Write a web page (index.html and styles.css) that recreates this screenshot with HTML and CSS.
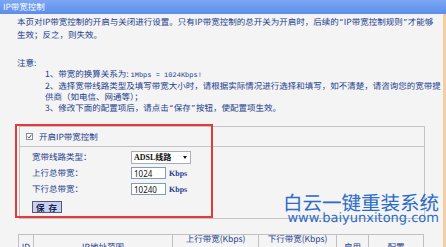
FILE: index.html
```html
<!DOCTYPE html>
<html lang="zh-CN">

<head>
  <meta charset="UTF-8" />
  <meta name="viewport" content="width=device-width, initial-scale=1.0" />
  <title>IP带宽控制</title>
  <link rel="stylesheet" href="styles.css">
</head>

<body>
  <div class="title-bar">IP带宽控制</div>

  <div id="page">
    <p class="intro">本页对IP带宽控制的开启与关闭进行设置。只有IP带宽控制的总开关为开启时，后续的<span class="q">“</span>IP带宽控制规则<span class="q">”</span>才能够<br>生效；反之，则失效。</p>

    <div class="notice">
      <p class="notice-title">注意:</p>
      <p class="notice-item">1、带宽的换算关系为: <span class="mono">1Mbps = 1024Kbps!</span></p>
      <p class="notice-item">2、选择宽带线路类型及填写带宽大小时，请根据实际情况进行选择和填写，如不清楚，请咨询您的宽带提<br>供商（如电信、网通等）；</p>
      <p class="notice-item">3、修改下面的配置项后，请点击<span class="q">“</span>保存<span class="q">”</span>按钮，使配置项生效。</p>
    </div>

    <div class="panel">
      <div class="panel-head">
        <span class="check">
          <svg width="7" height="7" viewBox="0 0 7 7">
            <rect x="0.5" y="0.5" width="6" height="6" fill="#fff" stroke="#8c8c8c" />
            <path d="M1.7 3.6 L3 5 L5.4 1.8" fill="none" stroke="#3b5590" stroke-width="1" />
          </svg>
        </span>
        <span>开启IP带宽控制</span>
      </div>
      <div class="panel-body">
        <label>宽带线路类型：</label>
        <div class="select-wrap">
          <select id="line-type">
            <option>ADSL线路</option>
          </select>
        </div>

        <label>上行总带宽：</label>
        <input type="text" class="bw-input" value="1024" />
        <span class="unit">Kbps</span>

        <label>下行总带宽：</label>
        <input type="text" class="bw-input" value="10240" />
        <span class="unit">Kbps</span>

        <div class="btn-row">
          <input type="button" id="save" value="保 存" />
        </div>
      </div>
    </div>

    <table class="rules">
      <colgroup>
        <col style="width:15px">
        <col style="width:139px">
        <col style="width:43px">
        <col style="width:43px">
        <col style="width:39px">
        <col style="width:39px">
        <col style="width:32px">
        <col style="width:55px">
      </colgroup>
      <tr class="head-top">
        <th rowspan="2">ID</th>
        <th rowspan="2">IP地址范围</th>
        <th colspan="2" class="group">上行带宽(Kbps)</th>
        <th colspan="2" class="group">下行带宽(Kbps)</th>
        <th rowspan="2">启用</th>
        <th rowspan="2">配置</th>
      </tr>
      <tr class="head-sub">
        <th>最小</th>
        <th>最大</th>
        <th>最小</th>
        <th>最大</th>
      </tr>
    </table>

    <!-- annotation drawn over the screenshot -->
    <div class="highlight"></div>

    <div class="watermark">
      <div class="wm-name">白云一键重装系统</div>
      <div class="wm-url">www.baiyunxitong.com</div>
    </div>
  </div>
</body>

</html>
```

FILE: styles.css
```css
body {
  margin: 0;
  padding: 0;
  height: 100vh;
  overflow: hidden;
  background-color: #f6cca1;
  font-family: "Noto Sans CJK SC", "Noto Sans", sans-serif;
  font-size: 8.5px;
  text-rendering: geometricPrecision;
  color: #23408e;
}

.title-bar {
  height: 14px;
  line-height: 14px;
  padding-left: 3px;
  color: #fff;
  background: linear-gradient(#7ba7f3, #5d8deb);
}

#page {
  position: relative;
  width: 443px;
  height: 233px;
  overflow: hidden;
  background-color: #f4f4f4;
}

p {
  margin: 0;
}

.intro {
  padding: 2px 0 0 17px;
  line-height: 12px;
  white-space: nowrap;
}

.q {
  font-family: "Noto Sans", sans-serif;
  margin: 0 1px;
}

.notice {
  margin-top: 17px;
  line-height: 11.3px;
  white-space: nowrap;
}

.notice-title {
  padding-left: 17px;
}

.notice-item {
  padding-left: 45px;
}

.mono {
  font-family: "Liberation Mono", monospace;
  font-size: 7px;
  line-height: 1;
}

/* on/off panel */
.panel {
  margin: 12px 0 0 19px;
  width: 404px;
  border: 1px solid #c4c4c4;
}

.panel-head {
  display: flex;
  align-items: center;
  gap: 6px;
  height: 19px;
  padding-left: 6px;
  border-bottom: 1px solid #c4c4c4;
}

.check svg {
  display: block;
}

.panel-body {
  display: grid;
  grid-template-columns: 96px 35px max-content;
  grid-auto-rows: 16px;
  align-items: center;
  column-gap: 3px;
  padding: 2px 0 5px 12px;
}

.select-wrap {
  grid-column: 2 / span 2;
  position: relative;
  width: 60px;
  height: 13px;
}

.select-wrap::after {
  content: "";
  position: absolute;
  right: 4px;
  top: 5px;
  border-left: 2.5px solid transparent;
  border-right: 2.5px solid transparent;
  border-top: 3px solid #111;
}

#line-type {
  appearance: none;
  display: block;
  width: 60px;
  height: 13px;
  margin: 0;
  padding: 0 0 0 2px;
  box-sizing: border-box;
  border: 1px solid #a9aeb6;
  border-radius: 0;
  background-color: #fff;
  font-family: "Liberation Serif", "Noto Sans CJK SC", serif;
  font-size: 8px;
  font-weight: bold;
  color: #111;
}

.bw-input {
  display: block;
  width: 35px;
  height: 12px;
  margin: 0;
  padding: 0 2px;
  box-sizing: border-box;
  border: 1px solid #7f9db9;
  background-color: #fff;
  font-family: "Noto Sans", sans-serif;
  font-size: 8px;
  color: #111;
}

.unit {
  font-family: "Liberation Serif", serif;
  font-weight: bold;
  font-size: 8px;
  color: #1d3c8e;
}

.btn-row {
  grid-column: 1 / -1;
  margin-top: 4px;
}

#save {
  display: block;
  width: 30px;
  height: 12px;
  padding: 0;
  border: 1px solid #56586e;
  background-color: #c8d0f3;
  font-family: "Noto Sans CJK SC", sans-serif;
  font-size: 8.5px;
  font-weight: bold;
  line-height: 10px;
  color: #1b1f4a;
  letter-spacing: 1px;
}

/* rule list */
.rules {
  margin: 15px 0 0 18px;
  width: 405px;
  table-layout: fixed;
  border-collapse: collapse;
}

.rules th {
  padding: 0;
  border: 1px solid #c0c0c0;
  font-weight: normal;
  line-height: 10px;
  white-space: nowrap;
  overflow: hidden;
}

.head-top th {
  height: 13px;
}

.rules th.group {
  vertical-align: top;
  line-height: 9px;
}

.head-sub th {
  height: 8px;
}

.highlight {
  position: absolute;
  left: 15px;
  top: 110px;
  width: 194px;
  height: 90px;
  border: 2px solid #e33b3c;
}

.watermark {
  position: absolute;
  right: 4px;
  top: 178px;
  text-align: right;
  color: #2b6cc6;
}

.wm-name {
  font-size: 19.5px;
  line-height: 20px;
}

.wm-url {
  font-family: "DejaVu Sans", sans-serif;
  font-size: 13px;
  line-height: 14px;
}
```
